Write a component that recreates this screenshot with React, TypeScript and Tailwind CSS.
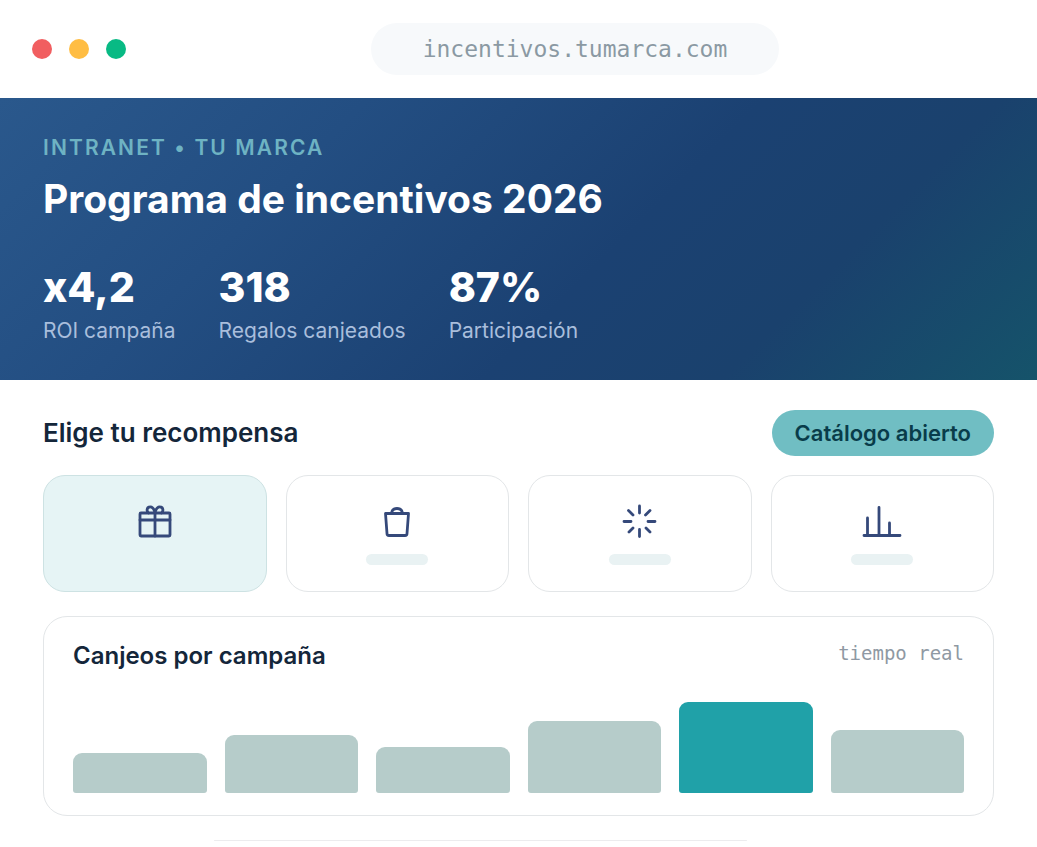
import type { ReactNode } from 'react';

type Stat = {
  value: string;
  label: string;
};

type Reward = {
  id: string;
  name: string;
  icon: ReactNode;
  selected?: boolean;
};

type Campaign = {
  name: string;
  height: number;
  active?: boolean;
};

const stats: Stat[] = [
  { value: 'x4,2', label: 'ROI campaña' },
  { value: '318', label: 'Regalos canjeados' },
  { value: '87%', label: 'Participación' },
];

const rewards: Reward[] = [
  {
    id: 'gift',
    name: 'Regalo',
    selected: true,
    icon: (
      <>
        <rect x="5" y="12" width="30" height="23" rx="1" />
        <path d="M5 19h30M20 12v23" />
        <path d="M20 12c-1-4.500-3-6.500-5.500-6-3 .5-3 4.500-1 6M20 12c1-4.500 3-6.500 5.500-6 3 .5 3 4.500 1 6" />
      </>
    ),
  },
  {
    id: 'bag',
    name: 'Bolsa',
    icon: (
      <>
        <path d="M8.500 12.500h23l-1.500 20a2 2 0 0 1-2 2h-16a2 2 0 0 1-2-2z" />
        <path d="M14.500 12c.5-3 2.500-4.500 5.500-4.500s5 1.500 5.500 4.500" />
      </>
    ),
  },
  {
    id: 'experience',
    name: 'Experiencia',
    icon: (
      <path d="M19.500 5v7M19.500 28.500v7M4 20.500h7M28 20.500h7M8.500 9.500l4.500 4.500M26 27l4 4M30 9.500l-4.500 4.500M13 27l-4 4" />
    ),
  },
  {
    id: 'ranking',
    name: 'Ranking',
    icon: <path d="M2 34.500h36M5.500 34V17M17 34V6.500M27.500 34V22" />,
  },
];

const campaigns: Campaign[] = [
  { name: 'Campaña 1', height: 40 },
  { name: 'Campaña 2', height: 58 },
  { name: 'Campaña 3', height: 46 },
  { name: 'Campaña 4', height: 72 },
  { name: 'Campaña 5', height: 91, active: true },
  { name: 'Campaña 6', height: 63 },
];

function BrowserBar() {
  return (
    <header className="flex h-[98px] items-center px-8">
      <div className="flex flex-3 gap-[17px]">
        <span className="size-5 rounded-full bg-[#f15e60]" />
        <span className="size-5 rounded-full bg-[#ffbd43]" />
        <span className="size-5 rounded-full bg-[#08ba84]" />
      </div>
      <div className="flex h-[52px] w-[408px] items-center justify-center rounded-full bg-[#f7f9fb] font-['DejaVu_Sans_Mono',monospace] text-[23px] text-[#8b99a3]">
        incentivos.tumarca.com
      </div>
      <div className="flex-2" />
    </header>
  );
}

function Hero() {
  return (
    <section className="bg-[linear-gradient(135deg,#2a588c_0%,#234e82_28%,#1b4172_58%,#1a416d_76%,#15536a_100%)] px-[43px] pt-9 pb-[35px]">
      <p className="text-[21px] leading-7 font-semibold tracking-widest text-[#6eb3c3]">
        INTRANET • TU MARCA
      </p>
      <h1 className="mt-3 text-[39px] leading-[50px] font-bold text-white">Programa de incentivos 2026</h1>
      <dl className="mt-[38px] flex gap-[43px]">
        {stats.map((stat) => (
          <div key={stat.label} className="flex flex-col-reverse">
            <dt className="mt-[5px] text-[21px] leading-7 text-[#a9bedc]">{stat.label}</dt>
            <dd className="text-[41px] leading-[50px] font-extrabold text-white">{stat.value}</dd>
          </div>
        ))}
      </dl>
    </section>
  );
}

function RewardCard({ reward }: { reward: Reward }) {
  return (
    <button
      type="button"
      aria-label={reward.name}
      aria-pressed={!!reward.selected}
      className={`flex h-[117px] flex-col items-center rounded-[22px] border pt-[25px] ${
        reward.selected ? 'border-[#cde2e3] bg-[#e6f4f5]' : 'border-[#e3e6e8] bg-white'
      }`}
    >
      <svg
        viewBox="0 0 40 40"
        className="size-10"
        fill="none"
        stroke="#35497a"
        strokeWidth="2.8"
        strokeLinecap="round"
        strokeLinejoin="round"
      >
        {reward.icon}
      </svg>
      {!reward.selected && <span className="mt-[13px] h-[11px] w-[62px] rounded-full bg-[#e9f2f3]" />}
    </button>
  );
}

function CampaignChart() {
  return (
    <section className="mt-6 rounded-3xl border border-[#e3e6e8] px-[29px] pt-6 pb-[22px]">
      <div className="flex items-start justify-between">
        <h2 className="text-[24px] leading-[30px] font-semibold text-[#14263a]">Canjeos por campaña</h2>
        <span className="font-['DejaVu_Sans_Mono',monospace] text-[19px] leading-6 text-[#8f99a3]">tiempo real</span>
      </div>
      <div className="mt-[31px] flex h-[91px] items-end gap-[18px]">
        {campaigns.map((campaign) => (
          <div
            key={campaign.name}
            className={`flex-1 rounded-t-[9px] rounded-b-[3px] ${campaign.active ? 'bg-[#20a1a8]' : 'bg-[#b6ccca]'}`}
            style={{ height: campaign.height }}
          />
        ))}
      </div>
    </section>
  );
}

export default function App() {
  return (
    <div className="bg-white font-['Inter',sans-serif]">
      <BrowserBar />
      <Hero />
      <main className="px-[43px] pt-[30px]">
        <div className="flex items-center justify-between">
          <h2 className="text-[26px] leading-[30px] font-semibold text-[#14263a]">Elige tu recompensa</h2>
          <a href="#catalogo" className="rounded-full bg-[#70bec3] px-[23px] py-2 text-[22px] leading-[30px] font-semibold text-[#093c4a]">
            Catálogo abierto
          </a>
        </div>
        <div className="mt-[19px] grid grid-cols-4 gap-[19px]">
          {rewards.map((reward) => (
            <RewardCard key={reward.id} reward={reward} />
          ))}
        </div>
        <CampaignChart />
        <div className="mt-6 ml-[18%] h-px w-[56%] rounded-full bg-[#ececee]" />
      </main>
    </div>
  );
}
